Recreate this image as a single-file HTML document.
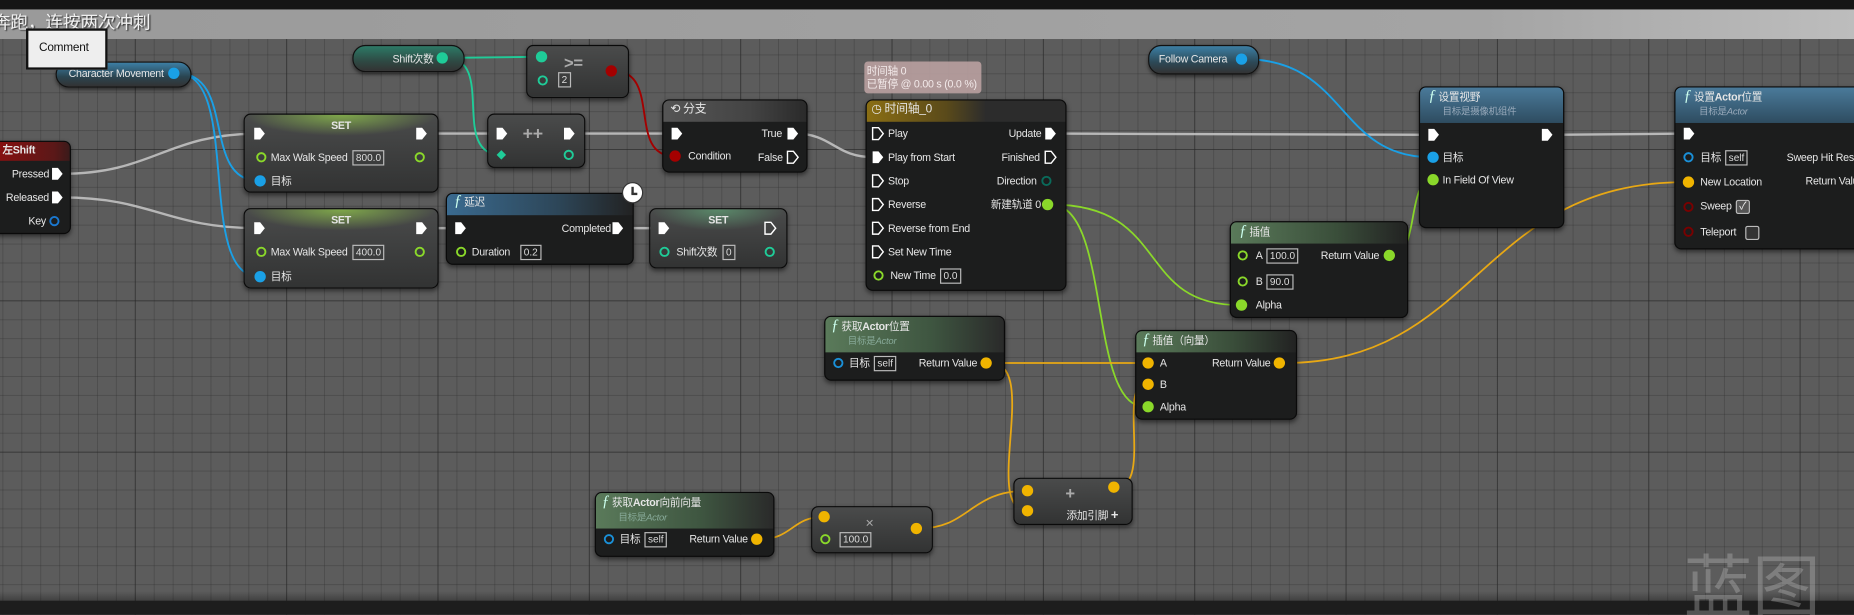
<!DOCTYPE html>
<html><head><meta charset="utf-8"><style>
*{margin:0;padding:0;box-sizing:border-box}
html,body{width:1854px;height:615px;overflow:hidden;background:#5a5a5a}
#w{position:absolute;left:0;top:0;width:1568px;height:520px;transform:scale(1.18240);transform-origin:0 0;overflow:hidden;
background-color:#5c5c5c;
background-image:
linear-gradient(to right,rgba(40,40,40,.55) 1px,transparent 1px),
linear-gradient(to bottom,rgba(40,40,40,.55) 1px,transparent 1px),
linear-gradient(to right,rgba(45,45,45,.3) 1px,transparent 1px),
linear-gradient(to bottom,rgba(45,45,45,.3) 1px,transparent 1px);
background-size:128px 128px,128px 128px,16px 16px,16px 16px;background-position:-14px -2px}
.f{font-family:"Liberation Sans","Noto Sans CJK SC",sans-serif}
.n{position:absolute;background:#1c1d1d;border:1px solid #0a0a0a;border-radius:6px;box-shadow:0 2px 4px rgba(0,0,0,.5);overflow:hidden}
.c{background:linear-gradient(#4a4b4b,#323333);}
.p{position:absolute;border-radius:11px;border:1px solid #111;box-shadow:0 2px 3px rgba(0,0,0,.5)}
.h{position:absolute;left:0;right:0;top:0}
.t{position:absolute;color:#e6e6e6;font-size:9px;line-height:12px;white-space:nowrap;letter-spacing:-0.2px;font-family:"Liberation Sans","Noto Sans CJK SC",sans-serif}
.s{color:#8aa;font-size:8px}
.b{position:absolute;border:1px solid #bbb;color:#ddd;font-size:8.5px;line-height:11px;padding:0 2px;font-family:"Liberation Sans",sans-serif;height:13px}
.fx{font-style:italic;font-family:"Liberation Serif",serif;font-size:13px;color:#cfe}
</style></head><body><div id="w" class="f">
<div style="position:absolute;left:0;top:0;width:1568px;height:8px;background:#151515"></div>
<div style="position:absolute;left:0;top:8px;width:1568px;height:25px;background:linear-gradient(90deg,#9a9a9a,#a4a4a4 80%,#bdbdbd)"></div>
<div class="t" style="left:-6px;top:10px;font-size:15px;line-height:20px;color:#f0f0f0;text-shadow:1px 1px 1px #333">奔跑，连按两次冲刺</div>
<div style="position:absolute;left:0;top:508px;width:1568px;height:12px;background:#1d1d1d"></div>
<div style="position:absolute;left:0;top:500px;width:1568px;height:8px;background:linear-gradient(transparent,rgba(0,0,0,.3))"></div>

<svg width="1568" height="520" style="position:absolute;left:0;top:0" fill="none" stroke-linecap="round">
<g stroke="#c8c8c8" stroke-width="2" opacity=".85">
<path d="M52 147 C130 147 140 113 219 113"/>
<path d="M52 167 C130 167 140 193 219 193"/>
<path d="M358 113 L424 113"/><path d="M484 113 L568 113"/>
<path d="M672 113 C705 113 705 133 740 133"/>
<path d="M892 113 L1211 114"/><path d="M1312 114 L1426 113"/>
<path d="M358 193 L389 193"/><path d="M525 193 L561 193"/>
</g>
<g stroke="#1aa0e6" stroke-width="1.6">
<path d="M150 62 C200 62 170 153 219 153"/>
<path d="M150 62 C205 62 165 234 219 234"/>
<path d="M1052 50 C1140 50 1130 133 1211 133"/>
</g>
<g stroke="#1fcc98" stroke-width="1.6">
<path d="M377 49 L458 48"/>
<path d="M377 49 C420 49 380 131 424 131"/>
</g>
<path d="M519 60 C560 60 530 132 570 132" stroke="#a40000" stroke-width="1.6"/>
<g stroke="#8ad82a" stroke-width="1.5">
<path d="M889 173 C990 173 960 258 1048 258"/>
<path d="M889 173 C940 173 920 344 968 344"/>
<path d="M1178 216 C1200 216 1190 152 1211 152"/>
</g>
<g stroke="#e8a814" stroke-width="1.5">
<path d="M838 307 L969 307"/>
<path d="M838 307 C880 307 830 432 869 432"/>
<path d="M643 456 C670 456 670 437 697 437"/>
<path d="M777 447 C820 447 820 415 869 415"/>
<path d="M944 412 C975 412 945 325 969 325"/>
<path d="M1086 307 C1250 307 1250 154 1426 154"/>
</g>
</svg>

<div class="p" style="left:47px;top:52px;width:115px;height:22px;background:linear-gradient(#3d7fa5,#2a4450 60%,#333)"></div>
<div class="t" style="left:58px;top:56px">Character Movement</div>
<div style="position:absolute;left:22px;top:24px;width:69px;height:35px;background:#eee;border:2px solid #111"></div>
<div class="t" style="left:33px;top:35px;color:#111;font-size:10px">Comment</div>

<div class="n" style="left:-6px;top:119px;width:66px;height:79px"><div class="h" style="height:16px;background:linear-gradient(90deg,#8a1010,#5a1818 80%,#3a1a1a)"></div></div>
<div class="t" style="left:2px;top:121px;font-weight:bold">左Shift</div>
<div class="t" style="left:10px;top:141px">Pressed</div>
<div class="t" style="left:5px;top:161px">Released</div>
<div class="t" style="left:24px;top:181px">Key</div>

<div class="p" style="left:298px;top:38px;width:95px;height:23px;background:linear-gradient(#2c7a66,#2e4a44 60%,#333)"></div>
<div class="t" style="left:332px;top:44px">Shift次数</div>

<div class="n c" style="left:445px;top:38px;width:87px;height:45px"></div>
<div class="t" style="left:477px;top:47px;font-size:14px;color:#aaa;font-weight:bold">&gt;=</div>
<div class="b" style="left:472px;top:61px">2</div>

<div class="n c" style="left:206px;top:96px;width:165px;height:67px"><div class="h" style="height:18px;background:radial-gradient(ellipse at 50% 0,#7fa84a,transparent 70%)"></div></div>
<div class="t" style="left:280px;top:100px;font-weight:bold">SET</div>
<div class="t" style="left:229px;top:127px">Max Walk Speed</div><div class="b" style="left:298px;top:127px">800.0</div>
<div class="t" style="left:229px;top:147px">目标</div>

<div class="n c" style="left:206px;top:176px;width:165px;height:68px"><div class="h" style="height:18px;background:radial-gradient(ellipse at 50% 0,#7fa84a,transparent 70%)"></div></div>
<div class="t" style="left:280px;top:180px;font-weight:bold">SET</div>
<div class="t" style="left:229px;top:207px">Max Walk Speed</div><div class="b" style="left:298px;top:207px">400.0</div>
<div class="t" style="left:229px;top:228px">目标</div>

<div class="n c" style="left:412px;top:96px;width:83px;height:46px"></div>
<div class="t" style="left:442px;top:108px;font-size:15px;color:#aaa;font-weight:bold">++</div>

<div class="n" style="left:560px;top:84px;width:123px;height:62px"><div class="h" style="height:18px;background:linear-gradient(90deg,#555,#444 60%,#2a2a2a)"></div></div>
<div class="t" style="left:567px;top:87px;font-size:10px">⟲ 分支</div>
<div class="t" style="left:644px;top:107px">True</div>
<div class="t" style="left:582px;top:126px">Condition</div>
<div class="t" style="left:641px;top:127px">False</div>

<div class="n" style="left:377px;top:163px;width:159px;height:61px"><div class="h" style="height:18px;background:linear-gradient(90deg,#3a6a8f,#2d4658 60%,#222)"></div></div>
<div class="t" style="left:384px;top:164px"><span class="fx">ƒ</span> 延迟</div>
<div class="t" style="left:475px;top:187px">Completed</div>
<div class="t" style="left:399px;top:207px">Duration</div><div class="b" style="left:440px;top:207px">0.2</div>
<div style="position:absolute;left:526px;top:154px;width:18px;height:18px;border-radius:50%;background:#fff;border:1px solid #333"></div>
<div style="position:absolute;left:534px;top:158px;width:1.5px;height:6px;background:#333"></div><div style="position:absolute;left:534px;top:163px;width:5px;height:1.5px;background:#333"></div>

<div class="n c" style="left:549px;top:176px;width:117px;height:51px"><div class="h" style="height:18px;background:radial-gradient(ellipse at 50% 0,#5a8a6a,transparent 70%)"></div></div>
<div class="t" style="left:599px;top:180px;font-weight:bold">SET</div>
<div class="t" style="left:572px;top:207px">Shift次数</div><div class="b" style="left:611px;top:207px">0</div>

<div style="position:absolute;left:731px;top:52px;width:99px;height:27px;background:#b9a0a0;border-radius:3px;opacity:.9"></div>
<div class="t" style="left:733px;top:54px;color:#f3eaea">时间轴 0</div>
<div class="t" style="left:733px;top:65px;color:#f3eaea">已暂停 @ 0.00 s (0.0 %)</div>

<div class="n" style="left:732px;top:84px;width:170px;height:162px"><div class="h" style="height:18px;background:linear-gradient(90deg,#8a6e14,#5a4a1a 40%,#2c2c2c 60%)"></div></div>
<div class="t" style="left:737px;top:87px;font-size:10px">◷ 时间轴_0</div>
<div class="t" style="left:751px;top:107px">Play</div><div class="t" style="left:853px;top:107px">Update</div>
<div class="t" style="left:751px;top:127px">Play from Start</div><div class="t" style="left:847px;top:127px">Finished</div>
<div class="t" style="left:751px;top:147px">Stop</div><div class="t" style="left:843px;top:147px">Direction</div>
<div class="t" style="left:751px;top:167px">Reverse</div><div class="t" style="left:838px;top:167px">新建轨道 0</div>
<div class="t" style="left:751px;top:187px">Reverse from End</div>
<div class="t" style="left:751px;top:207px">Set New Time</div>
<div class="t" style="left:753px;top:227px">New Time</div><div class="b" style="left:795px;top:227px">0.0</div>

<div class="p" style="left:971px;top:38px;width:94px;height:25px;background:linear-gradient(#3c7fa5,#2c4856 60%,#333)"></div>
<div class="t" style="left:980px;top:44px">Follow Camera</div>

<div class="n" style="left:1200px;top:73px;width:123px;height:120px"><div class="h" style="height:30px;background:linear-gradient(#4a7a9a,#2e4c60)"></div></div>
<div class="t" style="left:1208px;top:75px"><span class="fx">ƒ</span> 设置视野</div>
<div class="t s" style="left:1220px;top:89px;color:#9ab">目标是摄像机组件</div>
<div class="t" style="left:1220px;top:127px">目标</div>
<div class="t" style="left:1220px;top:146px">In Field Of View</div>

<div class="n" style="left:1416px;top:73px;width:170px;height:138px"><div class="h" style="height:30px;background:linear-gradient(#4a7a9a,#2e4c60)"></div></div>
<div class="t" style="left:1424px;top:75px"><span class="fx">ƒ</span> 设置<b>Actor</b>位置</div>
<div class="t s" style="left:1437px;top:89px;color:#9ab">目标是<i>Actor</i></div>
<div class="t" style="left:1438px;top:127px">目标</div><div class="b" style="left:1459px;top:127px">self</div>
<div class="t" style="left:1511px;top:127px">Sweep Hit Result</div>
<div class="t" style="left:1438px;top:148px">New Location</div><div class="t" style="left:1527px;top:147px">Return Value</div>
<div class="t" style="left:1438px;top:168px">Sweep</div>
<div style="position:absolute;left:1468px;top:169px;width:12px;height:12px;border:1.5px solid #bbb;border-radius:2px;background:#555;color:#eee;font-size:9px;line-height:9px;text-align:center">✓</div>
<div class="t" style="left:1438px;top:190px">Teleport</div>
<div style="position:absolute;left:1476px;top:191px;width:12px;height:12px;border:1.5px solid #bbb;border-radius:2px;background:#333"></div>

<div class="n" style="left:1040px;top:187px;width:151px;height:82px"><div class="h" style="height:18px;background:linear-gradient(90deg,#5a7a5a,#3a4e3a 60%,#222)"></div></div>
<div class="t" style="left:1048px;top:189px"><span class="fx">ƒ</span> 插值</div>
<div class="t" style="left:1062px;top:210px">A</div><div class="b" style="left:1071px;top:210px">100.0</div>
<div class="t" style="left:1117px;top:210px">Return Value</div>
<div class="t" style="left:1062px;top:232px">B</div><div class="b" style="left:1071px;top:232px">90.0</div>
<div class="t" style="left:1062px;top:252px">Alpha</div>

<div class="n" style="left:697px;top:267px;width:153px;height:55px"><div class="h" style="height:30px;background:linear-gradient(90deg,#5a7a5a,#3e5540 60%,#2a2a2a)"></div></div>
<div class="t" style="left:703px;top:269px"><span class="fx">ƒ</span> 获取<b>Actor</b>位置</div>
<div class="t s" style="left:717px;top:283px;color:#8a9">目标是<i>Actor</i></div>
<div class="t" style="left:718px;top:301px">目标</div><div class="b" style="left:739px;top:301px">self</div>
<div class="t" style="left:777px;top:301px">Return Value</div>

<div class="n" style="left:960px;top:279px;width:137px;height:76px"><div class="h" style="height:18px;background:linear-gradient(90deg,#5a7a5a,#3a4e3a 60%,#222)"></div></div>
<div class="t" style="left:966px;top:281px"><span class="fx">ƒ</span> 插值（向量）</div>
<div class="t" style="left:981px;top:301px">A</div><div class="t" style="left:1025px;top:301px">Return Value</div>
<div class="t" style="left:981px;top:319px">B</div>
<div class="t" style="left:981px;top:338px">Alpha</div>

<div class="n" style="left:503px;top:416px;width:152px;height:55px"><div class="h" style="height:30px;background:linear-gradient(90deg,#5a7a5a,#3e5540 60%,#2a2a2a)"></div></div>
<div class="t" style="left:509px;top:418px"><span class="fx">ƒ</span> 获取<b>Actor</b>向前向量</div>
<div class="t s" style="left:523px;top:432px;color:#8a9">目标是<i>Actor</i></div>
<div class="t" style="left:524px;top:450px">目标</div><div class="b" style="left:545px;top:450px">self</div>
<div class="t" style="left:583px;top:450px">Return Value</div>

<div class="n c" style="left:686px;top:428px;width:103px;height:40px"></div>
<div class="t" style="left:732px;top:436px;font-size:12px;color:#aaa">×</div>
<div class="b" style="left:710px;top:450px">100.0</div>

<div class="n c" style="left:857px;top:404px;width:101px;height:40px"></div>
<div class="t" style="left:901px;top:411px;font-size:14px;color:#aaa;font-weight:bold">+</div>
<div class="t" style="left:902px;top:430px">添加引脚 <b style="font-size:11px">+</b></div>

<div class="t" style="left:1424px;top:460px;font-size:58px;line-height:64px;color:rgba(190,190,190,.35);font-family:'Noto Sans CJK SC',sans-serif">蓝图</div>

<svg width="1568" height="520" style="position:absolute;left:0;top:0">
<defs>
<path id="ex" d="M-4 -5 H1 L5 0 L1 5 H-4 Z"/>
</defs>
<g fill="#fff">
<use href="#ex" x="48" y="147"/><use href="#ex" x="48" y="167"/>
<use href="#ex" x="219" y="113"/><use href="#ex" x="356" y="113"/>
<use href="#ex" x="219" y="193"/><use href="#ex" x="356" y="193"/>
<use href="#ex" x="424" y="113"/><use href="#ex" x="481" y="113"/>
<use href="#ex" x="572" y="113"/><use href="#ex" x="670" y="113"/>
<use href="#ex" x="389" y="193"/><use href="#ex" x="522" y="193"/>
<use href="#ex" x="561" y="193"/>
<use href="#ex" x="742" y="133"/><use href="#ex" x="888" y="113"/>
<use href="#ex" x="1212" y="114"/><use href="#ex" x="1308" y="114"/>
<use href="#ex" x="1428" y="113"/>
</g>
<g fill="none" stroke="#fff" stroke-width="1.2">
<use href="#ex" x="651" y="193"/><use href="#ex" x="670" y="133"/><use href="#ex" x="888" y="133"/>
<use href="#ex" x="742" y="113"/><use href="#ex" x="742" y="153"/><use href="#ex" x="742" y="173"/><use href="#ex" x="742" y="193"/><use href="#ex" x="742" y="213"/>
</g>
<g stroke-width="1.6">
<circle cx="46" cy="187" r="3.5" fill="none" stroke="#1a78d0"/>
<circle cx="147" cy="62" r="4" fill="#1aa0e6" stroke="#1aa0e6"/>
<circle cx="220" cy="153" r="4" fill="#1aa0e6" stroke="#1aa0e6"/>
<circle cx="220" cy="234" r="4" fill="#1aa0e6" stroke="#1aa0e6"/>
<circle cx="221" cy="133" r="3.5" fill="none" stroke="#8ad82a"/><circle cx="355" cy="133" r="3.5" fill="none" stroke="#8ad82a"/>
<circle cx="221" cy="213" r="3.5" fill="none" stroke="#8ad82a"/><circle cx="355" cy="213" r="3.5" fill="none" stroke="#8ad82a"/>
<circle cx="374" cy="49" r="4" fill="#1fcc98" stroke="#1fcc98"/>
<circle cx="458" cy="48" r="4" fill="#1fcc98" stroke="#1fcc98"/>
<circle cx="459" cy="68" r="3.5" fill="none" stroke="#1fcc98"/>
<path d="M424 127 L428 131 L424 135 L420 131Z" fill="#1fcc98" stroke="none"/>
<circle cx="481" cy="131" r="3.5" fill="none" stroke="#1fcc98"/>
<circle cx="562" cy="213" r="3.5" fill="none" stroke="#1fcc98"/><circle cx="651" cy="213" r="3.5" fill="none" stroke="#1fcc98"/>
<circle cx="517" cy="60" r="4" fill="#a40000" stroke="#a40000"/>
<circle cx="571" cy="132" r="4" fill="#a40000" stroke="#a40000"/>
<circle cx="390" cy="213" r="3.5" fill="none" stroke="#8ad82a"/>
<circle cx="885" cy="153" r="3.5" fill="none" stroke="#0a6a5a"/>
<circle cx="886" cy="173" r="4" fill="#8ad82a" stroke="#8ad82a"/>
<circle cx="743" cy="233" r="3.5" fill="none" stroke="#8ad82a"/>
<circle cx="1050" cy="50" r="4" fill="#1aa0e6" stroke="#1aa0e6"/>
<circle cx="1212" cy="133" r="4" fill="#1aa0e6" stroke="#1aa0e6"/>
<circle cx="1212" cy="152" r="4" fill="#8ad82a" stroke="#8ad82a"/>
<circle cx="1428" cy="133" r="3.5" fill="none" stroke="#1a90d8"/>
<circle cx="1428" cy="154" r="4" fill="#f0b400" stroke="#f0b400"/>
<circle cx="1428" cy="175" r="3.5" fill="none" stroke="#7a0000"/>
<circle cx="1428" cy="196" r="3.5" fill="none" stroke="#7a0000"/>
<circle cx="1051" cy="216" r="3.5" fill="none" stroke="#8ad82a"/>
<circle cx="1051" cy="238" r="3.5" fill="none" stroke="#8ad82a"/>
<circle cx="1050" cy="258" r="4" fill="#8ad82a" stroke="#8ad82a"/>
<circle cx="1175" cy="216" r="4" fill="#8ad82a" stroke="#8ad82a"/>
<circle cx="709" cy="307" r="3.5" fill="none" stroke="#1a90d8"/>
<circle cx="834" cy="307" r="4" fill="#f0b400" stroke="#f0b400"/>
<circle cx="971" cy="307" r="4" fill="#f0b400" stroke="#f0b400"/>
<circle cx="971" cy="325" r="4" fill="#f0b400" stroke="#f0b400"/>
<circle cx="971" cy="344" r="4" fill="#8ad82a" stroke="#8ad82a"/>
<circle cx="1082" cy="307" r="4" fill="#f0b400" stroke="#f0b400"/>
<circle cx="515" cy="456" r="3.5" fill="none" stroke="#1a90d8"/>
<circle cx="640" cy="456" r="4" fill="#f0b400" stroke="#f0b400"/>
<circle cx="697" cy="437" r="4" fill="#f0b400" stroke="#f0b400"/>
<circle cx="698" cy="456" r="3.5" fill="none" stroke="#8ad82a"/>
<circle cx="775" cy="447" r="4" fill="#f0b400" stroke="#f0b400"/>
<circle cx="869" cy="415" r="4" fill="#f0b400" stroke="#f0b400"/>
<circle cx="869" cy="432" r="4" fill="#f0b400" stroke="#f0b400"/>
<circle cx="942" cy="412" r="4" fill="#f0b400" stroke="#f0b400"/>
</g>
</svg>
</div></body></html>
